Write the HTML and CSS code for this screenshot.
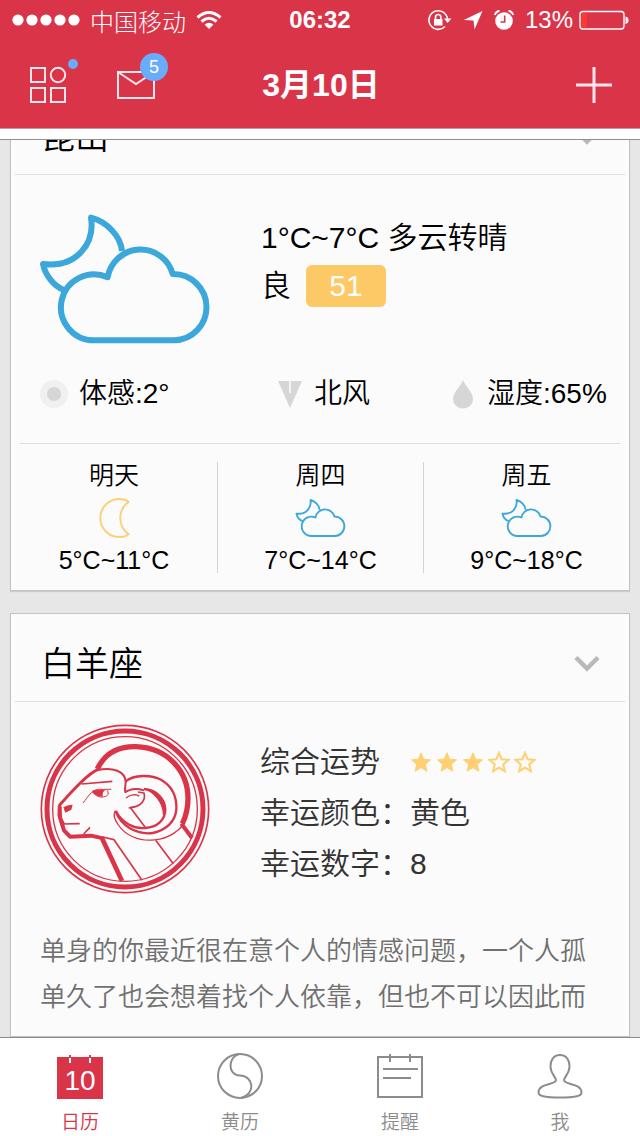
FILE: index.html
```html
<!DOCTYPE html>
<html lang="zh-CN">
<head>
<meta charset="utf-8">
<meta name="viewport" content="width=device-width">
<title>日历</title>
<link rel="stylesheet" href="styles.css">
</head>
<body>
<svg class="defs" width="0" height="0" aria-hidden="true">
  <symbol id="night-cloud" viewBox="114 66 522 396">
    <path d="M323 259A99 99 0 1 0 282 448H522A99.500 99.500 0 0 0 518 249A100 100 0 0 0 323 259Z"/>
    <path d="M366 180C362 135 320 92 273 80C285 155 232 232 129 219C135 250 160 285 192 297"/>
  </symbol>
  <symbol id="star" viewBox="0 0 22 22"><path d="M11 1.800L13.700 8.300L20.500 8.900L15.300 13.400L16.900 20.200L11 16.600L5.100 20.200L6.700 13.400L1.500 8.900L8.300 8.300Z"/></symbol>
</svg>
<div class="app">
  <header class="top">
    <div class="status">
      <div class="status-left">
        <svg width="68" height="12" viewBox="0 0 68 12" fill="#fff"><circle cx="6" cy="6" r="5.600"/><circle cx="20" cy="6" r="5.600"/><circle cx="34" cy="6" r="5.600"/><circle cx="48" cy="6" r="5.600"/><circle cx="62" cy="6" r="5.600"/></svg>
        <span>中国移动</span>
        <svg width="26" height="20" viewBox="0 0 26 20" fill="none" stroke="#fff" stroke-width="3"><path d="M1.500 7.500Q13-2.500 24.500 7.500M5.500 11.500Q13 5 20.500 11.500"/><path d="M13 19L8.600 14.600Q13 11 17.400 14.600Z" fill="#fff" stroke="none"/></svg>
      </div>
      <time class="clock">06:32</time>
      <div class="status-right">
        <svg width="24" height="22" viewBox="0 0 24 22" fill="none" stroke="#fff" stroke-width="1.600"><path d="M17 17.500A9.300 9.300 0 1 1 19.500 10"/><path d="M16 9.500H23.500L19.600 14Z" fill="#fff" stroke="none"/><rect x="6" y="10" width="8.500" height="6.500" fill="#fff" stroke="none"/><path d="M7.500 10V8.200a2.700 2.700 0 0 1 5.400 0V10"/></svg>
        <svg width="20" height="20" viewBox="0 0 20 20" fill="#fff"><path d="M19.500 1L11.500 19.500L10.500 10.500L.8 10Z"/></svg>
        <svg width="20" height="20" viewBox="0 0 20 20"><circle cx="10" cy="11" r="8.800" fill="#fff"/><path d="M.8 5Q2 1.200 5.500 1M19.200 5Q18 1.200 14.500 1" fill="none" stroke="#fff" stroke-width="1.800"/><path d="M10.700 5.500V12H6.500" fill="none" stroke="#da3449" stroke-width="1.600"/></svg>
        <span>13%</span>
        <svg width="50" height="20" viewBox="0 0 50 20"><rect x="1" y="1.500" width="44" height="17.500" rx="3" fill="none" stroke="#fff" stroke-width="1.400"/><rect x="2.500" y="3" width="5" height="14.500" rx="1" fill="#ff3b30"/><path d="M46.500 6.500Q49.500 7 49.500 10.200T46.500 14Z" fill="#fff"/></svg>
      </div>
    </div>
    <div class="nav">
      <div class="nav-left">
        <button class="icon-button" type="button" aria-label="应用">
          <svg width="38" height="38" viewBox="0 0 38 38" fill="none" stroke="#ffe6ea" stroke-width="2"><path d="M1 2H15V16H1ZM1 22H15V36H1ZM21 22H35V36H21Z"/><circle cx="28" cy="9" r="7.200"/></svg>
          <span class="dot"></span>
        </button>
        <button class="icon-button" type="button" aria-label="消息">
          <svg width="38" height="30" viewBox="0 0 38 30" fill="none" stroke="#ffe6ea" stroke-width="2"><path d="M1 2H37V28H1ZM1 2L19 14L37 2"/></svg>
          <span class="badge">5</span>
        </button>
      </div>
      <h1 class="title">3月10日</h1>
      <button class="icon-button add" type="button" aria-label="添加">
        <svg width="36" height="36" viewBox="0 0 36 36" stroke="#ffe6ea" stroke-width="3"><path d="M18 0V36M0 18H36"/></svg>
      </button>
    </div>
  </header>

  <main class="feed">
    <div class="cards">
      <section class="card">
        <header class="card-head">
          <h2>昆山</h2>
          <button class="icon-button" type="button" aria-label="展开天气"><svg width="26" height="18" viewBox="0 0 26 18" fill="none" stroke="#b9b9b9" stroke-width="4.500"><path d="M2 2.500L13 13.500L24 2.500"/></svg></button>
        </header>
        <div class="weather">
          <svg class="weather-icon"><use href="#night-cloud"/></svg>
          <div class="weather-text">
            <p>1°C~7°C 多云转晴</p>
            <p class="air">良<span class="aqi">51</span></p>
          </div>
        </div>
        <ul class="metrics">
          <li><svg width="28" height="28" viewBox="0 0 28 28"><circle cx="14" cy="14" r="14" fill="#f0f0f0"/><circle cx="14" cy="14" r="7" fill="#d6d6d6"/></svg>体感:2°</li>
          <li><svg width="26" height="28" viewBox="0 0 26 28"><path d="M1 1H25L13 28Z" fill="#d6d6d6"/><path d="M13 1V13" stroke="#f4f4f4" stroke-width="2"/></svg>北风</li>
          <li><svg width="26" height="30" viewBox="0 0 26 30"><path d="M13 1C15 7 23 13 23 20A10 9.500 0 0 1 3 20C3 13 11 7 13 1Z" fill="#d6d6d6"/></svg>湿度:65%</li>
        </ul>
        <ul class="forecast">
          <li><span>明天</span><svg class="moon" viewBox="286 198 106 136"><path d="M383 216C374 209 364 207 354 207A59 59 0 0 0 354 325C364 325 374 323 383 316C348 292 348 240 383 216Z"/></svg><span>5°C~11°C</span></li>
          <li><span>周四</span><svg class="small-cloud"><use href="#night-cloud"/></svg><span>7°C~14°C</span></li>
          <li><span>周五</span><svg class="small-cloud"><use href="#night-cloud"/></svg><span>9°C~18°C</span></li>
        </ul>
      </section>

      <section class="card">
        <header class="card-head">
          <h2>白羊座</h2>
          <button class="icon-button" type="button" aria-label="展开星座"><svg width="26" height="18" viewBox="0 0 26 18" fill="none" stroke="#b9b9b9" stroke-width="4.500"><path d="M2 2.500L13 13.500L24 2.500"/></svg></button>
        </header>
        <div class="horoscope">
          <svg class="aries" viewBox="62 42 510 508" fill="none" stroke="#da3449" stroke-linejoin="round">
            <circle cx="317" cy="296" r="251" stroke-width="5"/>
            <circle cx="317" cy="296" r="234" stroke-width="15"/>
            <circle cx="317" cy="296" r="217" stroke-width="4"/>
            <path stroke-width="16" d="M234 176C258 125 304 108 350 109C444 112 506 182 506 264C506 292 501 316 489 340"/>
            <path stroke-width="12" d="M486 340L518 383"/>
            <path stroke-width="9" d="M240 175C205 190 160 240 121 284L119 316L133 342"/>
            <path stroke-width="12" d="M121 288L122 322L134 360L152 379L215 376L252 384"/>
            <path stroke-width="14" d="M248 384L308 512"/>
            <path stroke-width="5" d="M250 380L284 388L368 510M409 390L462 460M334 293L377 350"/>
            <path stroke-width="6" d="M232 180C282 168 318 184 319 215C319 225 315 236 318 246C332 235 352 233 374 240"/>
            <path stroke-width="7" d="M319 213C344 193 395 192 425 208C458 227 473 260 471 298C468 332 443 358 400 368C350 374 305 347 288 301"/>
            <path stroke-width="4" d="M288 302C276 320 302 364 342 380C380 397 432 390 463 369C482 356 492 348 487 340"/>
            <path stroke-width="7" d="M290 303C308 338 345 356 377 353C414 351 438 329 438 297C437 268 413 238 374 236"/>
            <path fill="#da3449" stroke-width="3" d="M374 236C402 243 432 277 432 313C444 275 418 236 374 236Z"/>
            <path stroke-width="5" d="M356 245L374 248C380 271 364 289 332 292"/>
            <path stroke-width="4" d="M320 263C330 254 350 249 360 258M328 293L346 290"/>
            <path stroke-width="5" d="M187 221L279 213M132 341L181 340M193 371L212 351"/>
            <path stroke-width="3" d="M191 278C207 259 216 239 237 237L276 237M220 246C235 264 257 264 267 252L265 240"/>
            <path fill="#da3449" stroke="none" d="M220 240L260 238Q248 243 250 259Q231 260 220 246ZM132 291Q145 282 160 283L156 298L138 307Z"/>
          </svg>
          <dl class="fortune">
            <div><dt>综合运势</dt><dd class="stars" role="img" aria-label="3 / 5">
              <svg><use href="#star"/></svg><svg><use href="#star"/></svg><svg><use href="#star"/></svg><svg class="empty"><use href="#star"/></svg><svg class="empty"><use href="#star"/></svg></dd></div>
            <div><dt>幸运颜色：</dt><dd>黄色</dd></div>
            <div><dt>幸运数字：</dt><dd>8</dd></div>
          </dl>
        </div>
        <p class="advice">单身的你最近很在意个人的情感问题，一个人孤单久了也会想着找个人依靠，但也不可以因此而</p>
      </section>
    </div>
  </main>

  <nav class="tabs">
    <a class="active" href="#calendar">
      <svg width="48" height="48" viewBox="0 0 48 48"><path d="M1 4H47V46H1Z" fill="#da3449"/><path d="M14 2V4M34 2V4" stroke="#da3449" stroke-width="2"/><path d="M14 5V10M34 5V10" stroke="#fff" stroke-width="2"/><text class="day" x="24" y="37" text-anchor="middle">10</text></svg>
      日历</a>
    <a href="#almanac">
      <svg width="48" height="48" viewBox="0 0 48 48"><circle cx="24" cy="23" r="22"/><path d="M23 1C12 4 11 22 24 22.500C38 23 40 41 25 45"/></svg>
      黄历</a>
    <a href="#reminders">
      <svg width="48" height="48" viewBox="0 0 48 48"><path d="M2 4H46V44H2ZM14 1V9M34 1V9M7 16H42M7 25H35"/></svg>
      提醒</a>
    <a href="#me">
      <svg width="48" height="48" viewBox="0 0 48 48"><path d="M24 2C17 2 14.500 8 14.500 13C14.500 21 20 24 20 27C20 32 2.500 30 2.500 39.500C2.500 43 8 44.500 24 44.500S45.500 43 45.500 39.500C45.500 30 28 32 28 27C28 24 33.500 21 33.500 13C33.500 8 31 2 24 2Z"/></svg>
      我</a>
  </nav>
</div>
</body>
</html>
```
FILE: styles.css
```css
* { box-sizing: border-box; margin: 0; padding: 0; }

body {
  font-family: "Liberation Sans", "Noto Sans CJK SC", sans-serif;
  font-weight: 350;
  color: #000;
  background: #e7e7e7;
}

svg { display: block; flex: none; }
ul { list-style: none; }

.defs { position: absolute; }

.app { display: flex; flex-direction: column; height: 100vh; }

/* Top bar */
.top {
  flex: none;
  color: #fff;
  background: #da3449;
  border-bottom: 10px solid #fff;
  box-shadow: inset 0 -1px #b99a9e, 0 1px #909090;
}

.status {
  display: grid;
  grid-template-columns: 1fr auto 1fr;
  align-items: center;
  height: 40px;
  padding: 0 12px;
  font-size: 24px;
  font-weight: 300;
}
.status-left, .status-right { display: flex; align-items: center; gap: 10px; }
.status-right { justify-content: flex-end; gap: 11px; margin-right: -1px; }
.status-right span { margin-right: -5px; }
.clock { font-weight: 700; }

.nav {
  display: grid;
  grid-template-columns: 1fr auto 1fr;
  align-items: center;
  height: 89px;
  padding: 0 28px 0 30px;
}
.nav-left { display: flex; align-items: center; gap: 49px; }
.title { font-size: 32px; line-height: 48px; }

.icon-button {
  position: relative;
  border: 0;
  background: none;
  color: inherit;
  font: inherit;
}
.add { justify-self: end; }

.dot {
  position: absolute;
  top: -7px;
  right: -10px;
  width: 10px;
  height: 10px;
  border-radius: 50%;
  background: #69acfc;
}
.badge {
  position: absolute;
  top: -17px;
  right: -13px;
  width: 28px;
  border-radius: 50%;
  background: #69acfc;
  font-size: 18px;
  line-height: 28px;
}

/* Card list */
.feed {
  flex: 1;
  min-height: 0;
  overflow: hidden;
  margin-top: 1px;
  padding: 0 10px;
}
.cards { display: grid; gap: 22px; margin-top: -54px; }

.card {
  min-height: 424px;
  background: #fbfbfb;
  border: 1px solid #c3c3c3;
  box-shadow: 0 1px 1px #ccc;
}
.card-head {
  display: flex;
  align-items: center;
  justify-content: space-between;
  height: 88px;
  margin: 0 4px;
  padding: 12px 25px 0 26px;
  border-bottom: 1px solid #e0e0e0;
}
.card-head h2 { font-size: 34px; font-weight: 350; line-height: 48px; }

.weather { display: flex; gap: 49px; padding: 38px 27px 0; }
.weather-icon {
  width: 174px;
  height: 132px;
  fill: none;
  stroke: #3ba7da;
  stroke-width: 18;
  stroke-linejoin: round;
}
.weather-text { padding-top: 1px; font-size: 30px; line-height: 48px; }
.air { display: flex; align-items: center; gap: 15px; }
.aqi {
  width: 80px;
  border-radius: 6px;
  background: #fdc966;
  color: #fff;
  line-height: 42px;
  text-align: center;
}

.metrics {
  display: grid;
  grid-template-columns: 237fr 173fr 161fr;
  padding: 29px 18px 29px 29px;
  font-size: 28px;
  line-height: 40px;
}
.metrics li { display: flex; align-items: center; gap: 11px; white-space: nowrap; }

.forecast {
  display: grid;
  grid-template-columns: repeat(3, 1fr);
  position: relative;
  padding: 19px 0 17px;
  font-size: 25px;
}
.forecast::before {
  content: "";
  position: absolute;
  inset: 0 9px auto;
  border-top: 1px solid #e0e0e0;
}
.forecast li {
  display: flex;
  flex-direction: column;
  align-items: center;
  justify-content: space-between;
  height: 111px;
  line-height: 26px;
}
.forecast li + li { border-left: 1px solid #d3d3d3; }
.moon { width: 35px; height: 44px; fill: none; stroke: #fdcf7b; stroke-width: 6; stroke-linejoin: round; }
.small-cloud { width: 51px; height: 40px; fill: none; stroke: #3ba7da; stroke-width: 19; stroke-linejoin: round; }

.horoscope { display: flex; gap: 50px; padding: 22px 29px 0; }
.aries { width: 170px; height: 170px; }
.fortune { padding-top: 12px; font-size: 30px; line-height: 51px; color: #333; }
.fortune div { display: flex; }
.fortune dt { width: 150px; }
.stars { display: flex; align-items: center; gap: 4px; }
.stars svg { width: 22px; height: 22px; fill: #ffcf72; stroke: #ffcf72; stroke-width: 1; }
.stars .empty { fill: none; stroke-width: 2; }

.advice { padding: 34px 29px 0; color: #707070; font-size: 26px; line-height: 46px; }

/* Bottom tabs */
.tabs {
  flex: none;
  display: grid;
  grid-template-columns: repeat(4, 1fr);
  border-top: 1px solid #8a8a8a;
  padding-top: 15px;
  background: #fff;
}
.tabs a {
  display: flex;
  flex-direction: column;
  align-items: center;
  gap: 9px;
  color: #8c8c8c;
  font-size: 19px;
  line-height: 26px;
  text-decoration: none;
}
.tabs svg { fill: none; stroke: #8c8c8c; stroke-width: 2; }
.tabs .active { color: #da3449; }
.tabs .active svg { stroke: none; }
.day { fill: #fff; font-size: 28px; }
```
